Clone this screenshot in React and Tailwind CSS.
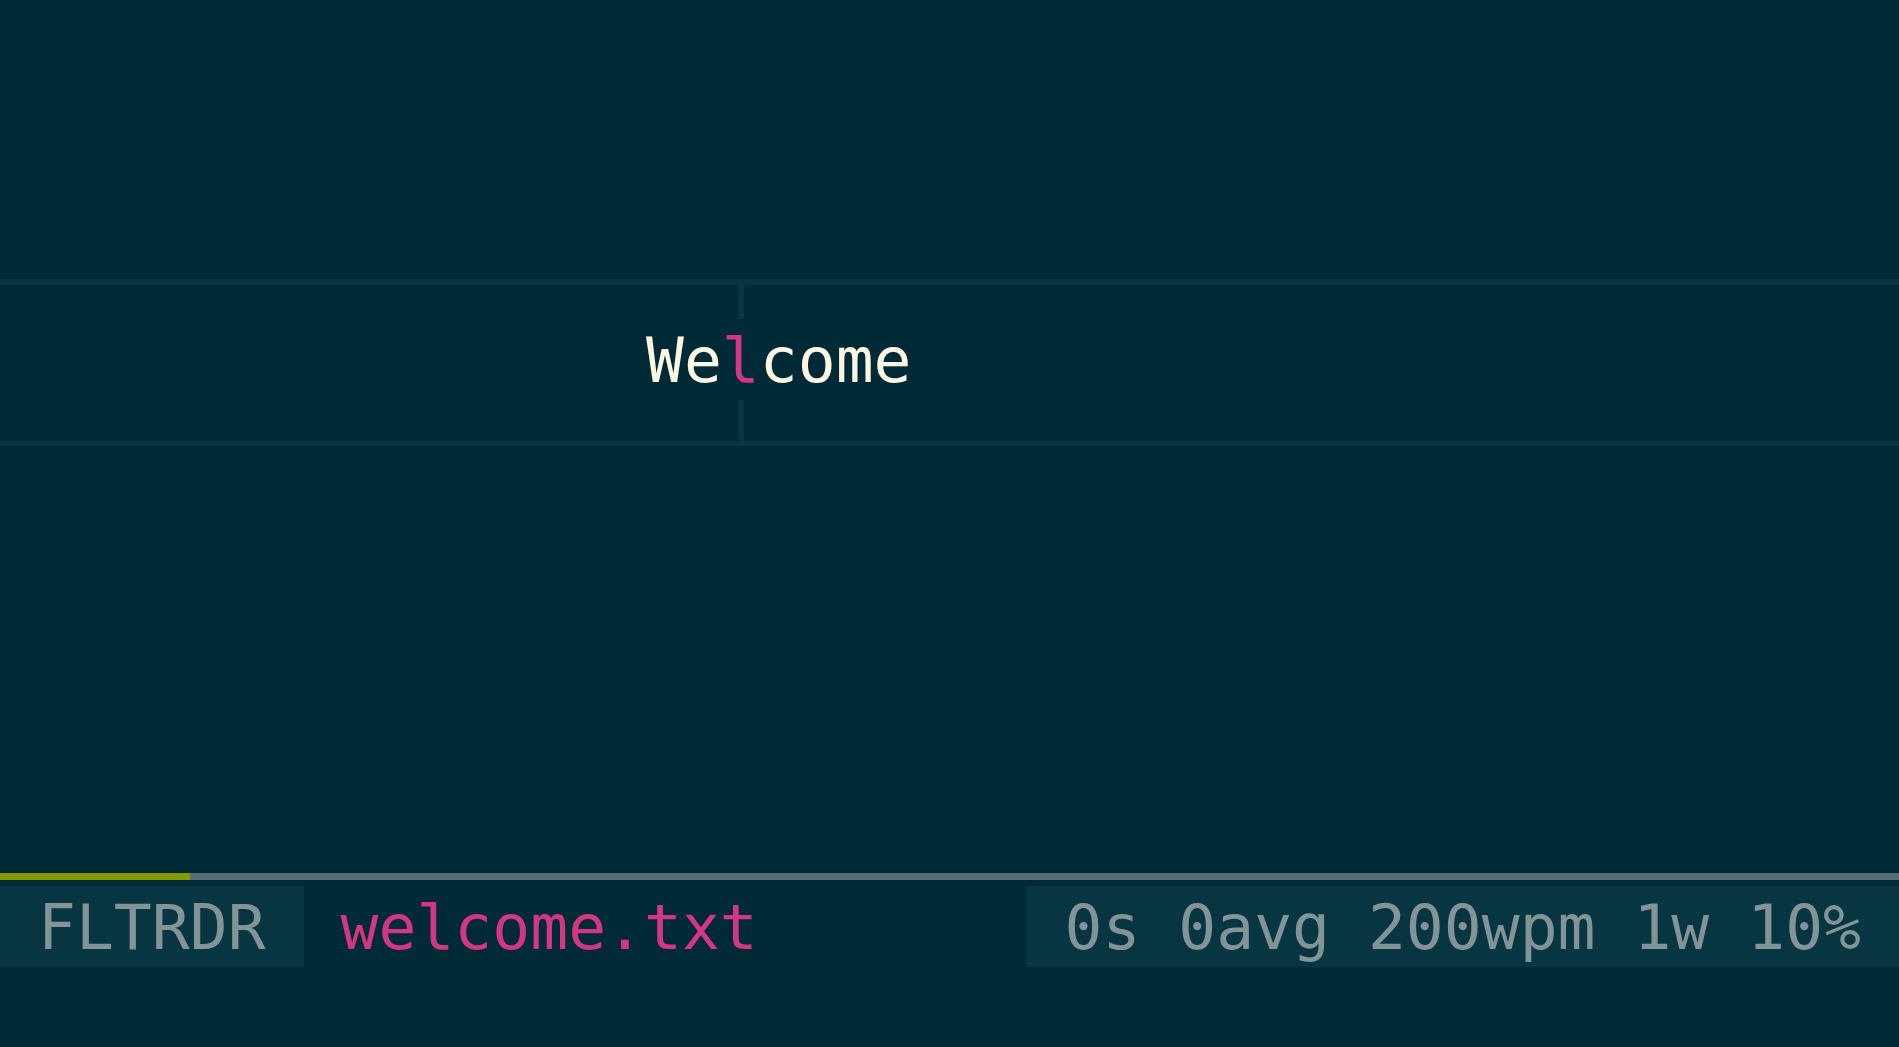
const mono = "font-['DejaVu_Sans_Mono','Liberation_Mono',monospace]";

export default function App() {
  const word = "Welcome";
  const orp = 2;
  const progress = 190;

  return (
    <div className={`h-screen w-full overflow-hidden bg-[#002b36] flex flex-col ${mono}`}>
      {/* top space */}
      <div className="h-[279px] shrink-0" />

      {/* reader line */}
      <div className="h-[6px] shrink-0 bg-[#073642]" />
      <div className="h-[156px] shrink-0 flex flex-col">
        <div className="ml-[738px] w-[6px] h-[34px] bg-[#073642]" />
        <div className="h-[81px] leading-[84px] text-[63px] whitespace-pre text-[#fdf6e3] pl-[646px]">
          {word.slice(0, orp)}
          <span className="text-[#d33682]">{word[orp]}</span>
          {word.slice(orp + 1)}
        </div>
        <div className="ml-[738px] w-[6px] h-[41px] bg-[#073642]" />
      </div>
      <div className="h-[5px] shrink-0 bg-[#073642]" />

      <div className="flex-1" />

      {/* progress */}
      <div className="h-[7px] shrink-0 bg-[#586e75] flex">
        <div className="h-full bg-[#859900]" style={{ width: progress }} />
      </div>

      {/* status bar */}
      <div className="mt-[6px] h-[81px] shrink-0 flex items-stretch text-[63px] leading-[84px] whitespace-pre">
        <div className="bg-[#073642] px-[38px] text-[#839496]">FLTRDR</div>
        <div className="ml-[37px] text-[#d33682]">welcome.txt</div>
        <div className="flex-1" />
        <div className="bg-[#073642] px-[38px] text-[#839496]">0s 0avg 200wpm 1w 10%</div>
      </div>

      <div className="h-[80px] shrink-0" />
    </div>
  );
}
